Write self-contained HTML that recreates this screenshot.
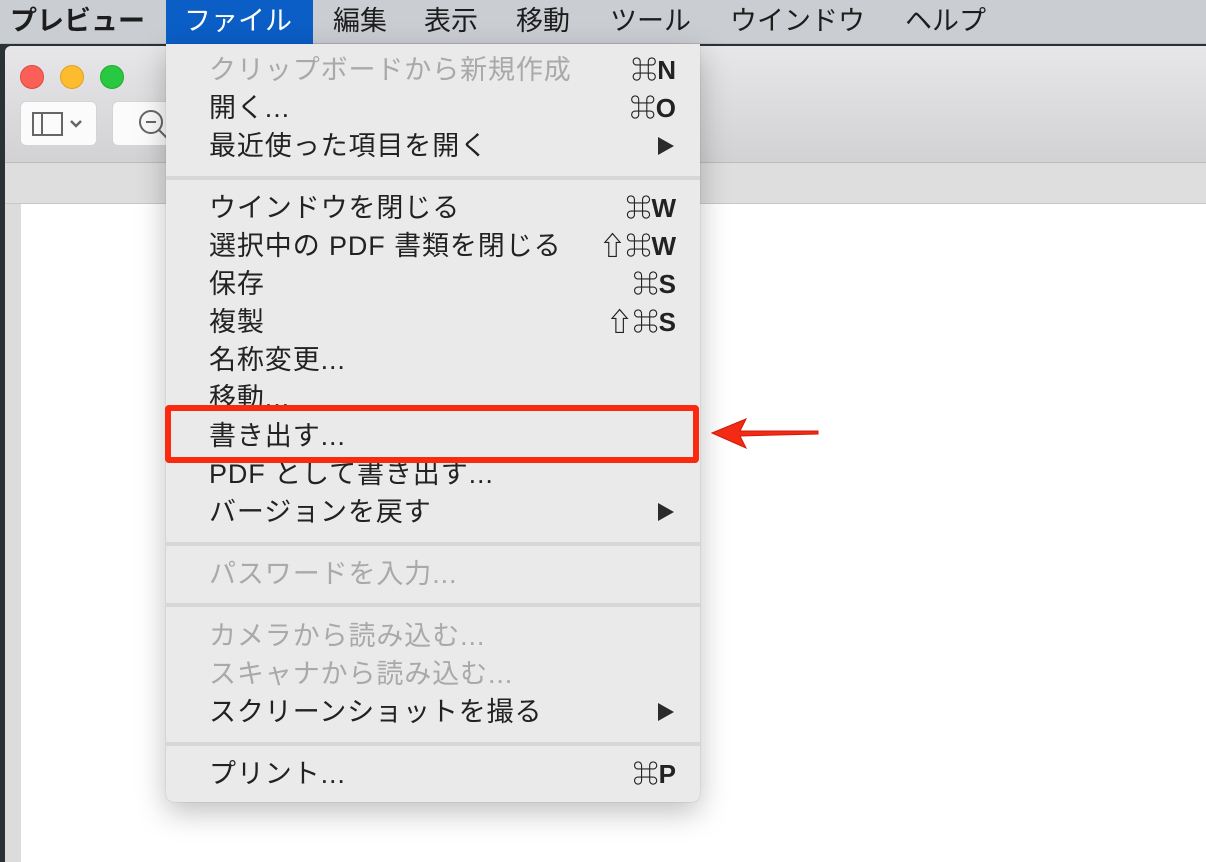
<!DOCTYPE html>
<html><head><meta charset="utf-8"><style>
*{margin:0;padding:0;box-sizing:border-box}
html,body{width:1206px;height:862px;overflow:hidden}
body{position:relative;background:#2a3236;font-family:"Liberation Sans","Noto Sans CJK JP",sans-serif;}
.mb{position:absolute;left:0;top:0;width:1206px;height:44px;background:#cacdd2;border-bottom:1px solid #b8babe}
.mb span{position:absolute;top:3px;font-size:27px;color:#1d1d1d;line-height:36px}
.hl{background:#0b5ec6;color:#fff!important;top:0!important;height:44px;line-height:42px!important;padding:0 18px;left:166px;width:147px}
.win{position:absolute;left:5px;top:46px;width:1201px;height:816px;background:#dcdcdc;border-radius:6px 0 0 0;overflow:hidden}
.title{position:absolute;left:0;top:0;width:1201px;height:117px;background:linear-gradient(#e7e6e8,#d2d1d4);border-bottom:1px solid #bdbdbd;border-radius:6px 0 0 0}
.band{position:absolute;left:0;top:118px;width:1201px;height:40px;background:#dedede;border-bottom:1px solid #c8c8c8}
.page{position:absolute;left:16px;top:158px;width:1185px;height:658px;background:#fff}
.dot{position:absolute;top:19px;width:24px;height:24px;border-radius:50%}
.btn{position:absolute;top:55px;height:45px;background:#fbfbfb;border-radius:6px;border:1px solid #d4d4d4}
.menu{position:absolute;left:166px;top:44px;width:534px;height:758px;background:#eaeaeb;border-radius:0 0 8px 8px;box-shadow:0 10px 30px rgba(0,0,0,.25),0 0 1px rgba(0,0,0,.3)}
.it{position:absolute;left:43px;font-size:27px;letter-spacing:0.9px;color:#222;line-height:38px;white-space:nowrap}
.dis{color:#a9a9aa}
.sc{position:absolute;right:24px;font-size:26px;font-weight:bold;color:#222;line-height:38px}
.sep{position:absolute;left:0;width:534px;height:4px;background:#d7d7d8}
.tri{position:absolute;right:26px;width:0;height:0;border-top:9px solid transparent;border-bottom:9px solid transparent;border-left:16px solid #2b2b2b}
</style></head><body>
<div class="win">
 <div class="title">
  <div class="dot" style="left:15px;background:#fc5f57;border:1px solid #e0443e"></div>
  <div class="dot" style="left:55px;background:#fdbc2e;border:1px solid #dea123"></div>
  <div class="dot" style="left:95px;background:#28c840;border:1px solid #1eab2f"></div>
  <div class="btn" style="left:15px;width:77px">
   <svg width="77" height="45" viewBox="0 0 77 45"><rect x="12" y="11" width="29" height="22" fill="none" stroke="#666" stroke-width="2"/><line x1="21" y1="11" x2="21" y2="33" stroke="#666" stroke-width="2"/><path d="M50 19l5 5 5-5" fill="none" stroke="#666" stroke-width="2.5"/></svg>
  </div>
  <div class="btn" style="left:107px;width:80px">
   <svg width="60" height="45"><circle cx="38" cy="20" r="11" fill="none" stroke="#666" stroke-width="2"/><line x1="33" y1="20" x2="43" y2="20" stroke="#666" stroke-width="2"/><line x1="46" y1="28" x2="55" y2="37" stroke="#666" stroke-width="2"/></svg>
  </div>
 </div>
 <div class="band"></div>
 <div class="page"></div>
</div>
<div class="mb">
 <span style="left:10px;font-weight:bold">プレビュー</span>
 <span class="hl">ファイル</span>
 <span style="left:333px">編集</span>
 <span style="left:424px">表示</span>
 <span style="left:516px">移動</span>
 <span style="left:610px">ツール</span>
 <span style="left:730px">ウインドウ</span>
 <span style="left:905px">ヘルプ</span>
</div>
<div class="menu">
 <div class="it dis" style="top:7px">クリップボードから新規作成</div><div class="sc dis" style="top:7px">⌘N</div>
 <div class="it" style="top:45px">開く...</div><div class="sc" style="top:45px">⌘O</div>
 <div class="it" style="top:83px">最近使った項目を開く</div><div class="tri" style="top:93px"></div>
 <div class="sep" style="top:132px"></div>
 <div class="it" style="top:145px">ウインドウを閉じる</div><div class="sc" style="top:145px">⌘W</div>
 <div class="it" style="top:183px">選択中の PDF 書類を閉じる</div><div class="sc" style="top:183px">⇧⌘W</div>
 <div class="it" style="top:221px">保存</div><div class="sc" style="top:221px">⌘S</div>
 <div class="it" style="top:259px">複製</div><div class="sc" style="top:259px">⇧⌘S</div>
 <div class="it" style="top:297px">名称変更...</div>
 <div class="it" style="top:335px">移動...</div>
 <div class="it" style="top:373px">書き出す...</div>
 <div class="it" style="top:411px">PDF として書き出す...</div>
 <div class="it" style="top:449px">バージョンを戻す</div><div class="tri" style="top:459px"></div>
 <div class="sep" style="top:498px"></div>
 <div class="it dis" style="top:511px">パスワードを入力...</div>
 <div class="sep" style="top:559px"></div>
 <div class="it dis" style="top:573px">カメラから読み込む...</div>
 <div class="it dis" style="top:611px">スキャナから読み込む...</div>
 <div class="it" style="top:649px">スクリーンショットを撮る</div><div class="tri" style="top:659px"></div>
 <div class="sep" style="top:698px"></div>
 <div class="it" style="top:711px">プリント...</div><div class="sc" style="top:711px">⌘P</div>
</div>
<div style="position:absolute;left:165px;top:405px;width:534px;height:58px;border:6px solid #fa2a10;border-radius:4px"></div>
<svg style="position:absolute;left:700px;top:410px" width="130" height="50"><path d="M12 23 L46 9 L40 21 L118 21 L118 24 L40 26 L46 38 Z" fill="#f32a14" stroke="#d01a08" stroke-width="1"/></svg>
</body></html>
